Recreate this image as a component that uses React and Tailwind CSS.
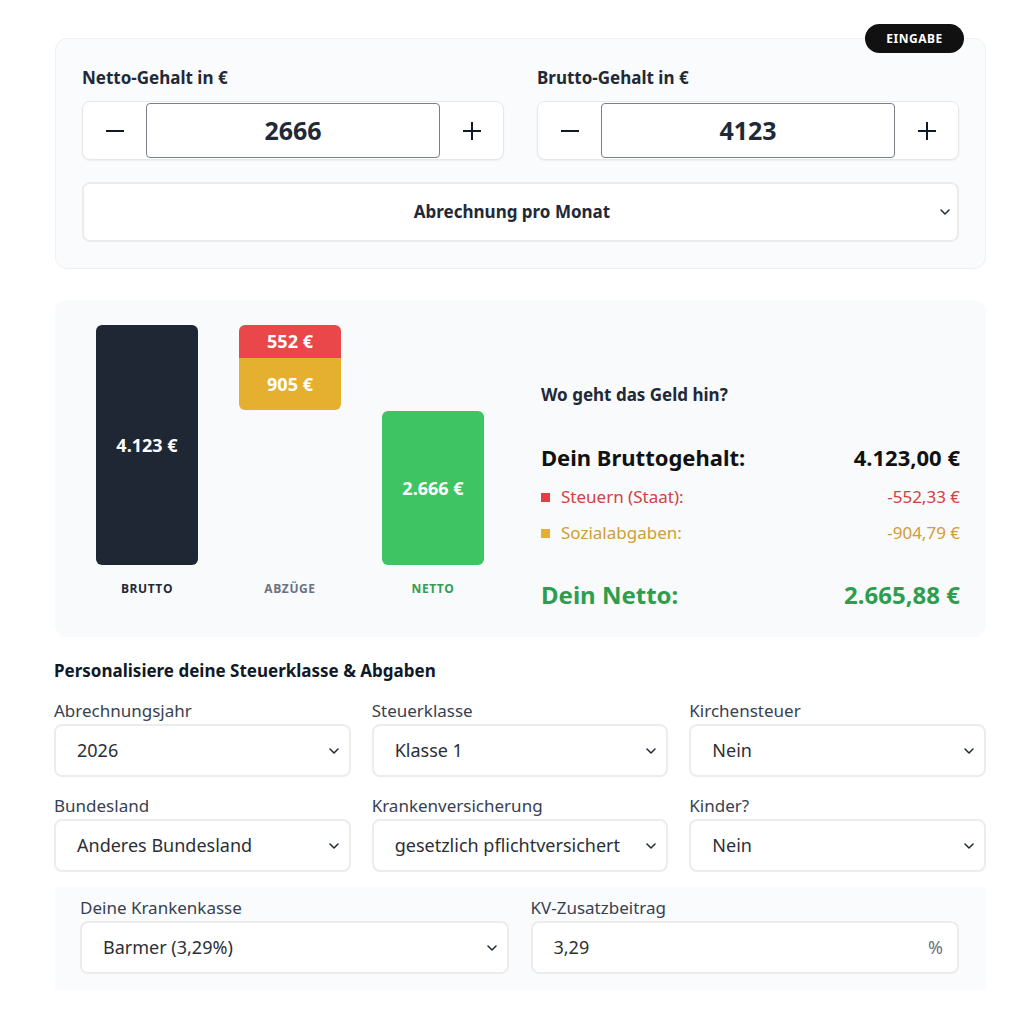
import { useState } from 'react'

const sans = { fontFamily: '"Noto Sans", "Open Sans", sans-serif' }

function Chevron({ className = '' }) {
  return (
    <svg width="10" height="6" viewBox="0 0 10 6" className={className} fill="none">
      <path d="M1 1l4 4 4-4" stroke="#1f2937" strokeWidth="1.5" strokeLinecap="round" strokeLinejoin="round" />
    </svg>
  )
}

function Stepper({ label, value }) {
  return (
    <div className="flex-1">
      <div className="text-[17px] leading-5 font-bold text-[#1f2937]">{label}</div>
      <div className="mt-[13px] flex h-[59px] items-stretch rounded-lg border border-[#e5e7eb] bg-white shadow-[0_1px_2px_rgba(0,0,0,0.05)]">
        <button className="flex w-[63px] items-center justify-center">
          <svg width="18" height="2" viewBox="0 0 18 2"><rect width="18" height="2" fill="#111827" /></svg>
        </button>
        <div className="my-px flex flex-1 items-center justify-center rounded border border-[#7b7f86] bg-white text-[25px] font-bold text-[#1f2937]">{value}</div>
        <button className="flex w-[63px] items-center justify-center">
          <svg width="18" height="18" viewBox="0 0 18 18"><rect y="8" width="18" height="2" fill="#111827" /><rect x="8" width="2" height="18" fill="#111827" /></svg>
        </button>
      </div>
    </div>
  )
}

function SelectBox({ label, value, className = '' }) {
  return (
    <div className={className}>
      <div className="text-[17px] leading-[22px] text-[#374151]">{label}</div>
      <div className="mt-[2px] flex h-[53px] items-center justify-between rounded-lg border-2 border-[#ececec] bg-white pl-[21px] pr-[10px] text-[18px] text-[#2b2f36]">
        <span className="whitespace-nowrap">{value}</span>
        <Chevron />
      </div>
    </div>
  )
}

export default function App() {
  const [netto] = useState('2666')
  const [brutto] = useState('4123')

  return (
    <div className="min-h-[1024px] bg-white" style={sans}>
      <div className="ml-[55px] w-[931px] pt-[38px]">
        {/* Eingabe */}
        <div className="relative rounded-xl border border-[#eef0f2] bg-[#fafbfc] px-[26px] pb-[26px] pt-[29px]">
          <div className="absolute -top-[15px] right-[21px] flex h-[29px] w-[99px] items-center justify-center rounded-full bg-[#111111] text-[12px] font-bold tracking-[0.5px] text-white">EINGABE</div>
          <div className="flex gap-[33px]">
            <Stepper label="Netto-Gehalt in €" value={netto} />
            <Stepper label="Brutto-Gehalt in €" value={brutto} />
          </div>
          <div className="mt-[22px] flex h-[60px] items-center gap-[12px] rounded-lg border-2 border-[#ececec] bg-white pl-[12px] pr-[7px]">
            <span className="flex-1 text-center text-[17px] font-bold text-[#1f2937]">Abrechnung pro Monat</span>
            <Chevron />
          </div>
        </div>

        {/* Auswertung */}
        <div className="mt-[31px] flex h-[337px] items-start rounded-xl bg-[#f8fafc] pl-[41px] pr-[26px] pt-[25px]">
          <div className="flex gap-[41px] text-white" style={{ fontFamily: '"Open Sans", sans-serif' }}>
            <div className="flex w-[102px] flex-col items-center">
              <div className="flex h-[240px] w-full items-center justify-center rounded-md bg-[#1f2734] text-[18px] font-bold">4.123 €</div>
              <div className="mt-[15px] text-[12px] font-bold tracking-[0.6px] text-[#1f2937]">BRUTTO</div>
            </div>
            <div className="flex w-[102px] flex-col items-center">
              <div className="flex h-[240px] w-full flex-col">
                <div className="flex h-[33px] items-center justify-center rounded-t-md bg-[#e9474a] text-[18px] font-bold">552 €</div>
                <div className="flex h-[52px] items-center justify-center rounded-b-md bg-[#e5b02f] text-[18px] font-bold">905 €</div>
              </div>
              <div className="mt-[15px] text-[12px] font-bold tracking-[0.6px] text-[#6b7280]">ABZÜGE</div>
            </div>
            <div className="flex w-[102px] flex-col items-center">
              <div className="flex h-[240px] w-full flex-col justify-end">
                <div className="flex h-[154px] w-full items-center justify-center rounded-md bg-[#3fc464] text-[18px] font-bold">2.666 €</div>
              </div>
              <div className="mt-[15px] text-[12px] font-bold tracking-[0.6px] text-[#2f9e4f]">NETTO</div>
            </div>
          </div>
          <div className="ml-[57px] mt-[60px] flex-1">
            <div className="text-[17px] font-bold leading-5 text-[#1f2937]">Wo geht das Geld hin?</div>
            <div className="mt-[37px] flex justify-between text-[22px] font-bold leading-[30px] text-[#111111]">
              <span>Dein Bruttogehalt:</span>
              <span>4.123,00 €</span>
            </div>
            <div className="mt-[13px] flex items-center justify-between text-[17px] leading-6 text-[#d4403e]">
              <span className="flex items-center gap-[11px]"><span className="h-[9px] w-[9px] bg-[#e0413f]" />Steuern (Staat):</span>
              <span>-552,33 €</span>
            </div>
            <div className="mt-[12px] flex items-center justify-between text-[17px] leading-6 text-[#d09e34]">
              <span className="flex items-center gap-[11px]"><span className="h-[9px] w-[9px] bg-[#e6ae33]" />Sozialabgaben:</span>
              <span>-904,79 €</span>
            </div>
            <div className="mt-[34px] flex justify-between text-[24px] font-bold leading-8 text-[#2e9e4e]">
              <span>Dein Netto:</span>
              <span>2.665,88 €</span>
            </div>
          </div>
        </div>

        {/* Personalisierung */}
        <div className="-ml-px mt-[24px] text-[17px] font-bold leading-5 text-[#111827]">Personalisiere deine Steuerklasse &amp; Abgaben</div>
        <div className="-ml-px mt-[19px] grid grid-cols-3 gap-x-[21px] gap-y-[18px]">
          <SelectBox label="Abrechnungsjahr" value="2026" />
          <SelectBox label="Steuerklasse" value="Klasse 1" />
          <SelectBox label="Kirchensteuer" value="Nein" />
          <SelectBox label="Bundesland" value="Anderes Bundesland" />
          <SelectBox label="Krankenversicherung" value="gesetzlich pflichtversichert" />
          <SelectBox label="Kinder?" value="Nein" />
        </div>

        <div className="mt-[15px] grid grid-cols-2 gap-x-[22px] bg-[#fafbfc] pb-[16px] pl-[25px] pr-[27px] pt-[10px]">
          <SelectBox label="Deine Krankenkasse" value="Barmer (3,29%)" />
          <div>
            <div className="text-[17px] leading-[22px] text-[#374151]">KV-Zusatzbeitrag</div>
            <div className="mt-[2px] flex h-[53px] items-center justify-between rounded-lg border-2 border-[#ececec] bg-white pl-[21px] pr-[14px] text-[18px] text-[#2b2f36]">
              <span>3,29</span>
              <span className="text-[#6b7280]">%</span>
            </div>
          </div>
        </div>
      </div>
    </div>
  )
}
